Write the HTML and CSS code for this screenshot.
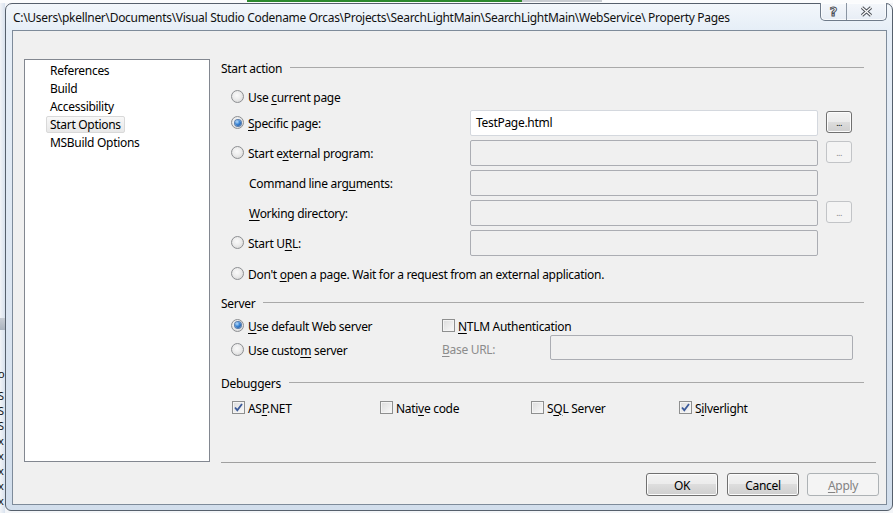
FILE: index.html
```html
<!DOCTYPE html>
<html lang="en">
<head>
<meta charset="utf-8">
<title>Property Pages</title>
<link rel="stylesheet" href="styles.css">
</head>
<body>
<div class="screen">
  <div class="topstrip"><div class="green"></div><div class="grayseg"></div></div>
  <div class="stage">
    <div class="behind">
      <div class="band"></div>
      <div class="bgtext">
        <div class="first">o</div>
        <div class="rest">S</div><div>S</div><div>S</div><div>x</div><div>x</div><div>x</div><div>x</div><div>x</div>
      </div>
    </div>
    <div class="window">
      <div class="titlebar"><span class="title">C:\Users\pkellner\Documents\Visual Studio Codename Orcas\Projects\SearchLightMain\SearchLightMain\WebService\ Property Pages</span></div>
      <div class="caption">
        <div class="cap help"><span class="qmark">?</span></div>
        <div class="cap close">
          <svg width="13" height="11" viewBox="0 0 13 11"><path d="M2 1.5 L11 9.5 M11 1.5 L2 9.5" stroke="#4a4f57" stroke-width="3.2" fill="none"/><path d="M2 1.5 L11 9.5 M11 1.5 L2 9.5" stroke="#ffffff" stroke-width="1.2" fill="none"/></svg>
        </div>
      </div>
      <div class="client">
        <div class="main">
          <ul class="list">
            <li><span>References</span></li>
            <li><span>Build</span></li>
            <li><span>Accessibility</span></li>
            <li class="sel"><span>Start Options</span></li>
            <li><span>MSBuild Options</span></li>
          </ul>
          <div class="panel">
            <div class="header"><span class="t">Start action</span><div class="line"></div></div>
            <div class="row first-row"><span class="radio"></span><span class="t">Use <u>c</u>urrent page</span></div>
            <div class="tbrows">
              <div class="tbrow">
                <div class="lab"><span class="radio on"></span><span class="t"><u>S</u>pecific page:</span></div>
                <div class="tb active">TestPage.html</div>
                <div class="dots">...</div>
              </div>
              <div class="tbrow">
                <div class="lab"><span class="radio"></span><span class="t">Start e<u>x</u>ternal program:</span></div>
                <div class="tb"></div>
                <div class="dots off">...</div>
              </div>
              <div class="tbrow">
                <div class="lab indent"><span class="t">Command line arg<u>u</u>ments:</span></div>
                <div class="tb"></div>
              </div>
              <div class="tbrow">
                <div class="lab indent"><span class="t"><u>W</u>orking directory:</span></div>
                <div class="tb"></div>
                <div class="dots off">...</div>
              </div>
              <div class="tbrow">
                <div class="lab"><span class="radio"></span><span class="t">Start U<u>R</u>L:</span></div>
                <div class="tb"></div>
              </div>
            </div>
            <div class="row dont-row"><span class="radio"></span><span class="t">Don't <u>o</u>pen a page. Wait for a request from an external application.</span></div>

            <div class="header server-h"><span class="t">Server</span><div class="line"></div></div>
            <div class="srow1">
              <div class="scell"><span class="radio on"></span><span class="t"><u>U</u>se default Web server</span></div>
              <div class="ccell"><span class="check"></span><span class="t"><u>N</u>TLM Authentication</span></div>
            </div>
            <div class="srow2">
              <div class="scell"><span class="radio"></span><span class="t">Use custo<u>m</u> server</span></div>
              <div class="baselab"><span class="t"><u>B</u>ase URL:</span></div>
              <div class="tb base"></div>
            </div>

            <div class="header debug-h"><span class="t">Debuggers</span><div class="line"></div></div>
            <div class="drow">
              <div class="dcell c1"><span class="check on"><svg width="11" height="11" viewBox="0 0 11 11"><path d="M2 5.5 L4.3 8.2 L9 2" stroke="#3b5a9a" stroke-width="1.8" fill="none"/></svg></span><span class="t">AS<u>P</u>.NET</span></div>
              <div class="dcell c2"><span class="check"></span><span class="t">Nati<u>v</u>e code</span></div>
              <div class="dcell c3"><span class="check"></span><span class="t">S<u>Q</u>L Server</span></div>
              <div class="dcell c4"><span class="check on"><svg width="11" height="11" viewBox="0 0 11 11"><path d="M2 5.5 L4.3 8.2 L9 2" stroke="#3b5a9a" stroke-width="1.8" fill="none"/></svg></span><span class="t">S<u>i</u>lverlight</span></div>
            </div>
          </div>
        </div>
        <div class="footer">
          <div class="sep"></div>
          <div class="buttons">
            <div class="btn ok">OK</div>
            <div class="btn cancel">Cancel</div>
            <div class="btn disabled"><span><u>A</u>pply</span></div>
          </div>
        </div>
      </div>
    </div>
  </div>
</div>
</body>
</html>
```

FILE: styles.css
```css
* { box-sizing: border-box; }
html, body {
  margin: 0;
  padding: 0;
}
body {
  width: 893px;
  height: 513px;
  overflow: hidden;
  background: #f3f5f8;
  font-family: "Noto Sans", "Open Sans", sans-serif;
  font-size: 12px;
  letter-spacing: -0.3px;
  color: #000;
}
u { text-decoration: underline; text-underline-offset: 2px; text-decoration-thickness: 1px; }
.t { padding-top: 2px; }

.screen { display: flex; flex-direction: column; width: 893px; height: 513px; }
.topstrip { height: 3px; display: flex; background: #fbfcfd; }
.green { margin-left: 247px; width: 275px; height: 2px; background: #2d8a2d; }
.grayseg { width: 80px; height: 2px; background: #c9cdd2; }

.stage { display: flex; flex: 1; }
.behind {
  width: 5px;
  overflow: hidden;
  background: linear-gradient(to right, #f2f4f7, #d8e2ee);
}
.band { margin-top: 315px; height: 12px; background: linear-gradient(#c7ccd3, #aab3be); }
.bgtext { margin-left: -2px; font-size: 11px; line-height: 15px; color: #111; }
.bgtext div { height: 15px; }
.bgtext .first { margin-top: 36px; }
.bgtext .rest { margin-top: 7px; }

.window {
  position: relative;
  width: 888px;
  height: 508px;
  border: 1px solid #56606c;
  border-radius: 7px 7px 6px 6px;
  background: linear-gradient(to bottom, #f3f7fb 0, #e6eef7 26px, #dbe5f1 60%, #d2deec 100%);
  padding: 0 5px 4px 6px;
  display: flex;
  flex-direction: column;
}
.titlebar {
  height: 26px;
  line-height: 24px;
  padding: 2px 0 0 1px;
  white-space: nowrap;
  overflow: hidden;
}
.title { color: #111; }

.caption {
  position: absolute;
  top: -1px;
  right: 5px;
  width: 67px;
  height: 18px;
  display: flex;
  border: 1px solid #6f7b8a;
  border-top: none;
  border-radius: 0 0 5px 5px;
  background: linear-gradient(#f4f7fb, #e7edf5);
  box-shadow: inset 0 0 0 1px rgba(255,255,255,0.7);
}
.cap { display: flex; align-items: center; justify-content: center; }
.help { width: 26px; border-right: 1px solid #8a95a3; }
.close { flex: 1; }
.qmark {
  font-family: "DejaVu Sans", sans-serif;
  font-weight: bold;
  font-size: 13px;
  line-height: 14px;
  letter-spacing: 0;
  color: #fff;
  -webkit-text-stroke: 1px #4a4f57;
}

.client {
  flex: 1;
  border: 1px solid #7e8b9a;
  background: #f0f0f0;
  padding: 28px 0 0 11px;
  display: flex;
  flex-direction: column;
  margin-bottom: 1px;
}
.main { display: flex; height: 403px; }

.list {
  width: 186px;
  margin: 0;
  padding: 1px 0 0 0;
  list-style: none;
  border: 1px solid #828790;
  background: #fff;
}
.list li { display: flex; height: 18px; padding-left: 21px; }
.list li span { display: block; line-height: 14px; margin-top: 1px; padding: 1px 3px 0; border: 1px solid transparent; }
.list li.sel span {
  border-color: #d9d9d9;
  border-radius: 2px;
  background: linear-gradient(#f8f8f8, #e8e8e8);
}

.panel { width: 643px; margin-left: 11px; display: flex; flex-direction: column; }
.header { display: flex; align-items: center; height: 16px; }
.header .line { flex: 1; height: 1px; background: #a9a9a9; margin-left: 8px; }

.row { display: flex; align-items: center; height: 20px; padding-left: 10px; }
.first-row { margin-top: 11px; }
.dont-row { margin-top: 5px; }

.radio {
  flex: none;
  width: 13px;
  height: 13px;
  margin-right: 4px;
  border-radius: 50%;
  border: 1px solid #8d8f92;
  background: radial-gradient(circle at 45% 40%, #fafafa 0, #ececec 45%, #cfcfcf 100%);
  display: flex;
  align-items: center;
  justify-content: center;
}
.radio.on::after {
  content: "";
  width: 6px;
  height: 6px;
  border-radius: 50%;
  background: radial-gradient(circle at 35% 30%, #b8dcfc 0, #3b86d6 45%, #12428a 100%);
  box-shadow: 0 0 0 1px #5b7fae;
}

.check {
  flex: none;
  width: 13px;
  height: 13px;
  margin-right: 3px;
  border: 1px solid #8e8f8f;
  background: linear-gradient(135deg, #dcdcdc, #fafafa);
  box-shadow: inset 0 0 0 1px #f4f4f4;
  display: flex;
  align-items: center;
  justify-content: center;
}
.check svg { display: block; }

.tbrows { margin-top: 2px; display: flex; flex-direction: column; }
.tbrow { display: flex; height: 30px; }
.lab { width: 249px; padding-left: 10px; display: flex; align-items: center; height: 29px; }
.lab.indent { padding-left: 28px; }
.tb {
  width: 348px;
  height: 26px;
  margin-top: 2px;
  border: 1px solid #abadb3;
  border-radius: 2px;
  background: #f0f0f0;
}
.tb.active {
  background: #fff;
  border-color: #d4d8de;
  padding-left: 5px;
  line-height: 24px;
}
.dots {
  width: 26px;
  height: 22px;
  margin-left: 8px;
  margin-top: 3px;
  border: 1px solid #707070;
  border-radius: 3px;
  background: linear-gradient(#f3f3f3 0, #ebebeb 50%, #dddddd 50%, #cfcfcf 100%);
  box-shadow: inset 0 0 0 1px #fcfcfc;
  font-size: 9px;
  line-height: 22px;
  text-align: center;
  letter-spacing: -0.5px;
}
.dots.off {
  border-color: #c2c4c7;
  background: #f4f4f4;
  box-shadow: none;
  color: #8a8a8a;
}

.server-h { margin-top: 11px; }
.srow1 { display: flex; height: 18px; margin-top: 6px; }
.srow2 { display: flex; height: 25px; margin-top: 1px; }
.scell { width: 221px; padding-left: 10px; display: flex; align-items: center; }
.srow2 .scell { padding-top: 3px; }
.ccell { display: flex; align-items: center; }
.baselab { width: 108px; display: flex; align-items: center; padding-top: 2px; color: #8c8c8c; }
.tb.base { width: 303px; height: 25px; margin-top: 0; }

.debug-h { margin-top: 14px; }
.drow { display: flex; height: 20px; margin-top: 7px; }
.dcell { display: flex; align-items: center; }
.c1 { width: 159px; padding-left: 11px; }
.c2 { width: 151px; }
.c3 { width: 148px; }

.footer { display: flex; flex-direction: column; }
.sep { margin-left: 197px; width: 655px; height: 1px; background: #a0a0a0; }
.buttons { display: flex; justify-content: flex-end; margin-top: 10px; padding-right: 7px; }
.btn {
  width: 72px;
  height: 23px;
  border: 1px solid #707070;
  border-radius: 3px;
  background: linear-gradient(#f3f3f3 0, #ebebeb 50%, #dddddd 50%, #cfcfcf 100%);
  box-shadow: inset 0 0 0 1px #fcfcfc;
  text-align: center;
  line-height: 19px;
  padding-top: 2px;
}
.btn.ok { margin-right: 9px; }
.btn.cancel { margin-right: 8px; }
.btn.disabled {
  border-color: #adb2b5;
  background: #f4f4f4;
  box-shadow: none;
  color: #838383;
}
```
